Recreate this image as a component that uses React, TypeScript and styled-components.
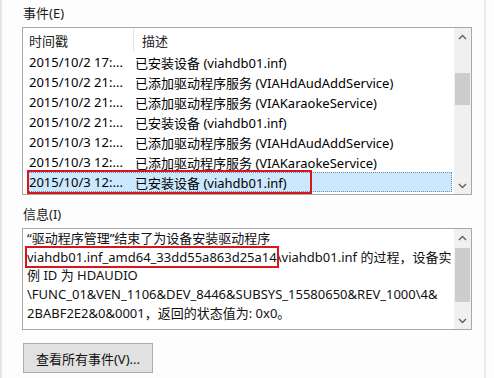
import React from "react";
import styled, { createGlobalStyle } from "styled-components";

const GlobalStyle = createGlobalStyle`
  html, body {
    margin: 0;
    padding: 0;
    background: #ffffff;
  }
  body {
    font-family: "Noto Sans", "Noto Sans CJK SC", sans-serif;
    font-size: 13px;
    color: #000;
  }
`;

const Page = styled.div`
  width: 494px;
  height: 378px;
  display: flex;
  background: #fdfdfd;
  box-sizing: border-box;
  border-left: 2px solid #e6e6e6;
  overflow: hidden;
`;

const Dialog = styled.div`
  width: 484px;
  border-right: 2px solid #ebebeb;
  box-sizing: border-box;
  padding: 5px 0 0 20px;
  display: flex;
  flex-direction: column;
`;

const GroupLabel = styled.div`
  height: 22px;
  line-height: 16px;
  padding-left: 1px;
  color: #1a1a1a;
`;

const Box = styled.div<{ $height: number }>`
  width: 450px;
  height: ${({ $height }) => $height}px;
  box-sizing: border-box;
  border: 1px solid #a8a8a8;
  background: #fff;
  display: flex;
`;

const ListArea = styled.div`
  flex: 1;
  padding-left: 4px;
  display: flex;
  flex-direction: column;
`;

const HeaderRow = styled.div`
  height: 24px;
  display: flex;
  align-items: center;
  color: #222;
`;

const HeaderCell = styled.div<{ $width?: number }>`
  width: ${({ $width }) => ($width ? `${$width}px` : "auto")};
  height: 100%;
  display: flex;
  align-items: center;
  padding-left: 2px;
  box-sizing: border-box;
  border-right: ${({ $width }) => ($width ? "1px solid #e5e5e5" : "none")};
  margin-right: ${({ $width }) => ($width ? "6px" : "0")};
`;

const Row = styled.div<{ $selected?: boolean }>`
  position: relative;
  height: 20px;
  display: flex;
  align-items: center;
  width: 425px;
  box-sizing: border-box;
  background: ${({ $selected }) => ($selected ? "#cce8ff" : "transparent")};
  outline: ${({ $selected }) => ($selected ? "1px dotted #7a8a99" : "none")};
  outline-offset: -1px;
  white-space: nowrap;
`;

const TimeCell = styled.div`
  width: 108px;
  padding-left: 2px;
  box-sizing: border-box;
  overflow: hidden;
`;

const DescCell = styled.div`
  flex: 1;
`;

const RedFrame = styled.div`
  position: absolute;
  left: 0;
  top: -2px;
  width: 285px;
  height: 24px;
  box-sizing: border-box;
  border: 2px solid #d9161e;
`;

const Scrollbar = styled.div`
  width: 17px;
  background: #f0f0f0;
  display: flex;
  flex-direction: column;
`;

const ArrowButton = styled.div`
  height: 17px;
  display: flex;
  align-items: center;
  justify-content: center;
`;

const Track = styled.div<{ $before: number; $thumb: number }>`
  flex: 1;
  padding-top: ${({ $before }) => $before}px;
  display: flex;
  flex-direction: column;
  align-items: center;

  &::before {
    content: "";
    display: block;
    width: 15px;
    height: ${({ $thumb }) => $thumb}px;
    background: #cdcdcd;
  }
`;

const InfoText = styled.div`
  flex: 1;
  padding: 0 0 0 4px;
  line-height: 18.7px;
  color: #111;
  white-space: nowrap;
  overflow: hidden;
`;

const Marked = styled.span`
  outline: 2px solid #d9161e;
  outline-offset: 0px;
`;

const Spacer = styled.div<{ $h: number }>`
  height: ${({ $h }) => $h}px;
  flex-shrink: 0;
`;

const Button = styled.button`
  width: 130px;
  height: 30px;
  box-sizing: border-box;
  background: #e1e1e1;
  border: 1px solid #adadad;
  font-family: "Noto Sans", "Noto Sans CJK SC", sans-serif;
  font-size: 13px;
  color: #111;
  padding: 0;
  margin-left: 1px;
`;

const Chevron: React.FC<{ up?: boolean }> = ({ up }) => (
  <svg width="9" height="6" viewBox="0 0 9 6">
    <path
      d={up ? "M1 5 L4.5 1.5 L8 5" : "M1 1 L4.5 4.5 L8 1"}
      fill="none"
      stroke="#606060"
      strokeWidth="1.4"
    />
  </svg>
);

const events = [
  ["2015/10/2 17:...", "已安装设备 (viahdb01.inf)"],
  ["2015/10/2 21:...", "已添加驱动程序服务 (VIAHdAudAddService)"],
  ["2015/10/2 21:...", "已添加驱动程序服务 (VIAKaraokeService)"],
  ["2015/10/2 21:...", "已安装设备 (viahdb01.inf)"],
  ["2015/10/3 12:...", "已添加驱动程序服务 (VIAHdAudAddService)"],
  ["2015/10/3 12:...", "已添加驱动程序服务 (VIAKaraokeService)"],
  ["2015/10/3 12:...", "已安装设备 (viahdb01.inf)"],
];

const App: React.FC = () => (
  <>
    <GlobalStyle />
    <Page>
      <Dialog>
        <GroupLabel>事件(E)</GroupLabel>
        <Box $height={168}>
          <ListArea>
            <HeaderRow>
              <HeaderCell $width={107}>时间戳</HeaderCell>
              <HeaderCell>描述</HeaderCell>
            </HeaderRow>
            {events.map(([time, desc], i) => {
              const selected = i === events.length - 1;
              return (
                <Row key={i} $selected={selected}>
                  <TimeCell>{time}</TimeCell>
                  <DescCell>{desc}</DescCell>
                  {selected && <RedFrame />}
                </Row>
              );
            })}
          </ListArea>
          <Scrollbar>
            <ArrowButton>
              <Chevron up />
            </ArrowButton>
            <Track $before={28} $thumb={32} />
            <ArrowButton>
              <Chevron />
            </ArrowButton>
          </Scrollbar>
        </Box>
        <Spacer $h={11} />
        <GroupLabel>信息(I)</GroupLabel>
        <Box $height={102}>
          <InfoText>
            “驱动程序管理”结束了为设备安装驱动程序
            <br />
            <Marked>viahdb01.inf_amd64_33dd55a863d25a14</Marked>\viahdb01.inf 的过程，设备实
            <br />
            例 ID 为 HDAUDIO
            <br />
            \FUNC_01&amp;VEN_1106&amp;DEV_8446&amp;SUBSYS_15580650&amp;REV_1000\4&amp;
            <br />
            2BABF2E2&amp;0&amp;0001，返回的状态值为: 0x0。
          </InfoText>
          <Scrollbar>
            <ArrowButton>
              <Chevron up />
            </ArrowButton>
            <Track $before={2} $thumb={54} />
            <ArrowButton>
              <Chevron />
            </ArrowButton>
          </Scrollbar>
        </Box>
        <Spacer $h={13} />
        <Button>查看所有事件(V)...</Button>
      </Dialog>
    </Page>
  </>
);

export default App;
